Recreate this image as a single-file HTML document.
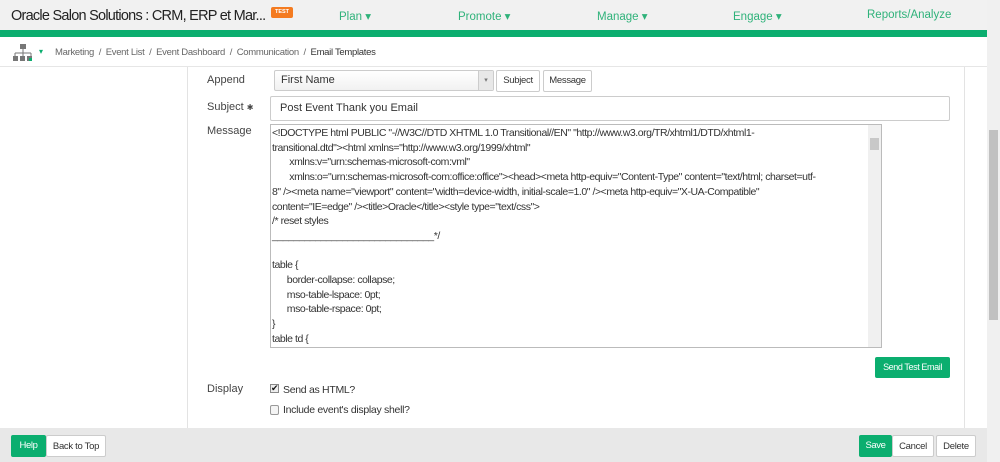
<!DOCTYPE html>
<html><head><style>
*{margin:0;padding:0;box-sizing:border-box}
body{width:1000px;height:462px;overflow:hidden;font-family:"Liberation Sans",sans-serif;background:#fff;position:relative;color:#333}
.a{position:absolute;white-space:nowrap}
.hdr{left:0;top:0;width:987px;height:31px;background:#f1f1f1}
.gb{left:0;top:30px;width:987px;height:7px;background:#0bae6f}
.nav{top:9px;font-size:11.5px;color:#2fb27a}
.bc{top:47px;font-size:9.5px;color:#666;letter-spacing:-.3px}
.lbl{font-size:11px;color:#444}
.btn{border:1px solid #ccc;border-radius:2px;background:#fff;font-size:9.5px;color:#333;text-align:center;letter-spacing:-.3px}
.ta{font-size:10.5px;color:#333;letter-spacing:-.45px}
.g{background:#0bae6f;color:#fff;border-radius:2px;font-size:9px;text-align:center;letter-spacing:-.4px}
</style></head><body>
<div class="a hdr"></div>
<div class="a" style="left:11px;top:8px;font-size:14.5px;color:#222;letter-spacing:-.75px">Oracle Salon Solutions : CRM, ERP et Mar...</div>
<div class="a" style="left:271px;top:7px;width:22px;height:11px;background:#f47b20;border-radius:2px;color:#fff;font-size:5.5px;text-align:center;line-height:11px;font-weight:bold">TEST</div>
<div class="a nav" style="left:339px">Plan ▾</div>
<div class="a nav" style="left:458px">Promote ▾</div>
<div class="a nav" style="left:597px">Manage ▾</div>
<div class="a nav" style="left:733px">Engage ▾</div>
<div class="a nav" style="left:867px">Reports/Analyze</div>
<div class="a gb"></div>
<div class="a" style="left:987px;top:0;width:13px;height:462px;background:#f0f0f0"></div>
<div class="a" style="left:989px;top:130px;width:9px;height:190px;background:#c1c1c1"></div>
<svg class="a" style="left:12px;top:44px" width="24" height="19"><rect x="8" y="0" width="6" height="5" fill="#777"/><path d="M11 5v4M3 9h16M3 9v3M11 9v3M19 9v3" stroke="#777" fill="none"/><rect x="1" y="12" width="5" height="5" fill="#777"/><rect x="8" y="12" width="5" height="5" fill="#777"/><rect x="15" y="12" width="5" height="5" fill="#777"/><rect x="17" y="14" width="3" height="3" fill="#0bae6f"/></svg>
<div class="a" style="left:39px;top:47px;font-size:8px;color:#0bae6f">▾</div>
<div class="a bc" style="left:55px">Marketing &nbsp;/&nbsp; Event List &nbsp;/&nbsp; Event Dashboard &nbsp;/&nbsp; Communication &nbsp;/&nbsp; <span style="color:#333">Email Templates</span></div>
<div class="a" style="left:0;top:66px;width:987px;height:1px;background:#e6e6e6"></div>
<div class="a" style="left:187px;top:67px;width:1px;height:361px;background:#e3e3e3"></div>
<div class="a" style="left:964px;top:67px;width:1px;height:361px;background:#e3e3e3"></div>
<div class="a lbl" style="left:207px;top:74px">Append</div>
<div class="a" style="left:274px;top:70px;width:220px;height:21px;border:1px solid #ccc;border-radius:2px;background:linear-gradient(#fff,#f1f1f1);font-size:11px;padding:3px 6px">First Name</div>
<div class="a" style="left:478px;top:71px;width:15px;height:19px;background:#e8e8e8;border-left:1px solid #ccc;font-size:7px;color:#777;text-align:center;line-height:19px">▾</div>
<div class="a btn" style="left:496px;top:70px;width:44px;height:22px;line-height:20px">Subject</div>
<div class="a btn" style="left:543px;top:70px;width:49px;height:22px;line-height:20px">Message</div>
<div class="a lbl" style="left:207px;top:101px">Subject <span style="font-size:8px">✱</span></div>
<div class="a" style="left:270px;top:96px;width:680px;height:25px;border:1px solid #ccc;border-radius:2px;font-size:11px;padding:5px 9px">Post Event Thank you Email</div>
<div class="a lbl" style="left:207px;top:125px">Message</div>
<div class="a" style="left:270px;top:124px;width:612px;height:224px;border:1px solid #bbb"></div>
<div class="a" style="left:868px;top:125px;width:13px;height:222px;background:#f0f0f0"></div>
<div class="a" style="left:870px;top:138px;width:9px;height:12px;background:#c8c8c8"></div>
<div class="a ta" style="left:272px;top:126px;line-height:14.7px">
&lt;!DOCTYPE html PUBLIC "-//W3C//DTD XHTML 1.0 Transitional//EN" "http://www.w3.org/TR/xhtml1/DTD/xhtml1-<br>
transitional.dtd"&gt;&lt;html xmlns="http://www.w3.org/1999/xhtml"<br>
&nbsp;&nbsp;&nbsp;&nbsp;&nbsp;&nbsp;&nbsp;xmlns:v="urn:schemas-microsoft-com:vml"<br>
&nbsp;&nbsp;&nbsp;&nbsp;&nbsp;&nbsp;&nbsp;xmlns:o="urn:schemas-microsoft-com:office:office"&gt;&lt;head&gt;&lt;meta http-equiv="Content-Type" content="text/html; charset=utf-<br>
8" /&gt;&lt;meta name="viewport" content="width=device-width, initial-scale=1.0" /&gt;&lt;meta http-equiv="X-UA-Compatible"<br>
content="IE=edge" /&gt;&lt;title&gt;Oracle&lt;/title&gt;&lt;style type="text/css"&gt;<br>
/* reset styles<br>
______________________________*/<br>
<br>
table {<br>
&nbsp;&nbsp;&nbsp;&nbsp;&nbsp;&nbsp;border-collapse: collapse;<br>
&nbsp;&nbsp;&nbsp;&nbsp;&nbsp;&nbsp;mso-table-lspace: 0pt;<br>
&nbsp;&nbsp;&nbsp;&nbsp;&nbsp;&nbsp;mso-table-rspace: 0pt;<br>
}<br>
table td {</div>
<div class="a g" style="left:875px;top:357px;width:75px;height:21px;line-height:21px">Send Test Email</div>
<div class="a lbl" style="left:207px;top:383px">Display</div>
<div class="a" style="left:270px;top:384px;width:9px;height:9px;border:1px solid #888;background:#eee;font-size:9px;line-height:7px;color:#111">✔</div>
<div class="a" style="left:283px;top:384px;font-size:10.5px;letter-spacing:-.3px">Send as HTML?</div>
<div class="a" style="left:270px;top:405px;width:9px;height:10px;border:1px solid #999;border-radius:2px;background:#f4f4f4"></div>
<div class="a" style="left:283px;top:404px;font-size:10.5px;letter-spacing:-.3px">Include event's display shell?</div>
<div class="a" style="left:0;top:428px;width:987px;height:34px;background:#e8e8e8"></div>
<div class="a g" style="left:11px;top:435px;width:35px;height:22px;line-height:22px;font-size:9.5px">Help</div>
<div class="a btn" style="left:46px;top:435px;width:60px;height:22px;line-height:21px">Back to Top</div>
<div class="a g" style="left:859px;top:435px;width:33px;height:22px;line-height:22px;font-size:9.5px">Save</div>
<div class="a btn" style="left:892px;top:435px;width:42px;height:22px;line-height:21px">Cancel</div>
<div class="a btn" style="left:936px;top:435px;width:40px;height:22px;line-height:21px">Delete</div>
</body></html>
